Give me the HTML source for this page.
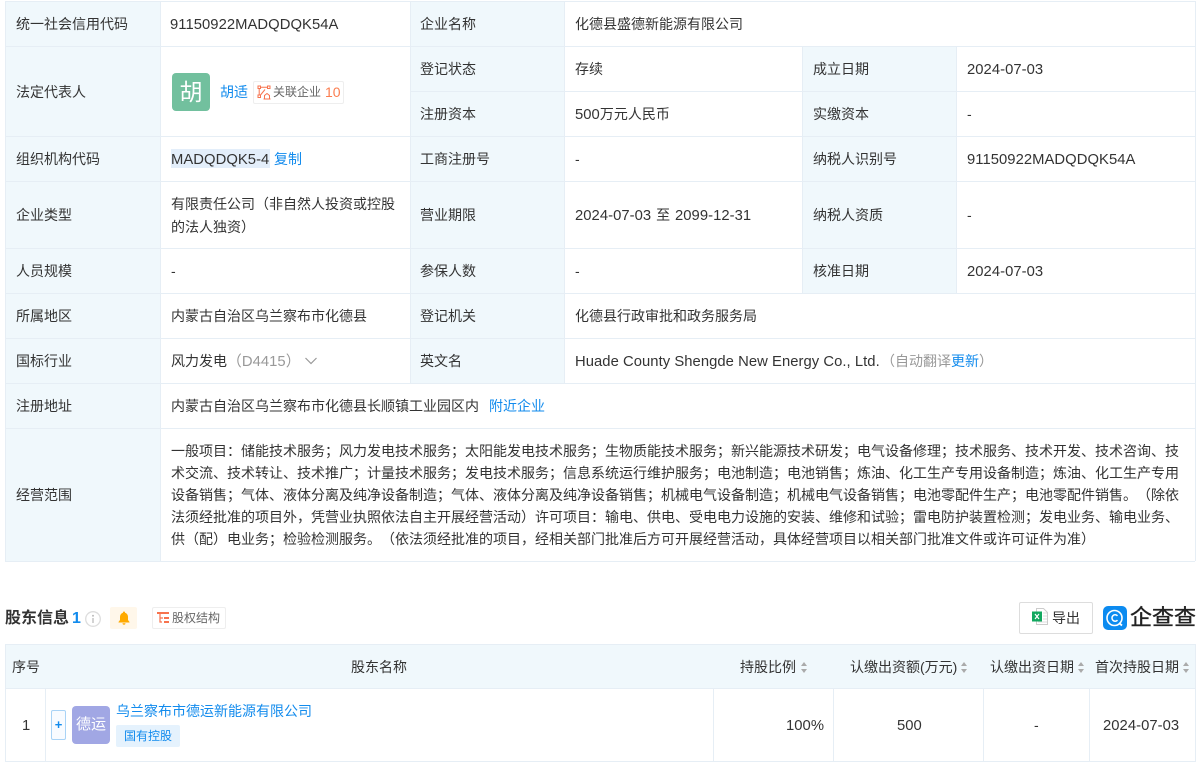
<!DOCTYPE html>
<html lang="zh-CN"><head><meta charset="utf-8"><title>企业信息</title>
<style>
html,body{margin:0;padding:0;background:#fff}
#p{position:relative;width:1200px;height:765px;overflow:hidden;background:#fff;font:14px/20px "Liberation Sans","Noto Sans CJK SC",sans-serif;color:#333;text-spacing-trim:space-all;font-feature-settings:"chws" 0}
#p div,#p span.a,#p svg{position:absolute}
.b{background:#f0f8fc}
.h{background:#e6eef5;height:1px}
.v{background:#e6eef5;width:1px}
.t{white-space:nowrap}
.n{font-size:14.8px;letter-spacing:.05px}
div.n{margin-top:1px}
.l{color:#128bed}
.g{color:#999}
</style></head><body><div id="p">

<div class="b" style="left:5px;top:1px;width:155px;height:560px"></div>
<div class="b" style="left:411px;top:1px;width:153px;height:382px"></div>
<div class="b" style="left:803px;top:46px;width:153px;height:247px"></div>
<div class="b" style="left:5px;top:644px;width:1190px;height:44px"></div>

<div class="h" style="left:5px;top:1px;width:1190px"></div>
<div class="h" style="left:5px;top:46px;width:1190px"></div>
<div class="h" style="left:410px;top:91px;width:785px"></div>
<div class="h" style="left:5px;top:136px;width:1190px"></div>
<div class="h" style="left:5px;top:181px;width:1190px"></div>
<div class="h" style="left:5px;top:248px;width:1190px"></div>
<div class="h" style="left:5px;top:293px;width:1190px"></div>
<div class="h" style="left:5px;top:338px;width:1190px"></div>
<div class="h" style="left:5px;top:383px;width:1190px"></div>
<div class="h" style="left:5px;top:428px;width:1190px"></div>
<div class="h" style="left:5px;top:561px;width:1190px"></div>
<div class="v" style="left:5px;top:1px;height:560px"></div>
<div class="v" style="left:160px;top:1px;height:560px"></div>
<div class="v" style="left:410px;top:1px;height:382px"></div>
<div class="v" style="left:564px;top:1px;height:382px"></div>
<div class="v" style="left:802px;top:46px;height:247px"></div>
<div class="v" style="left:956px;top:46px;height:247px"></div>
<div class="v" style="left:1195px;top:1px;height:560px"></div>

<div class="t" style="left:16px;top:14px">统一社会信用代码</div>
<div class="t n" style="left:170px;top:14px">91150922MADQDQK54A</div>
<div class="t" style="left:420px;top:14px">企业名称</div>
<div class="t" style="left:575px;top:14px">化德县盛德新能源有限公司</div>

<div class="t" style="left:16px;top:82px">法定代表人</div>
<div style="left:172px;top:73px;width:38px;height:38px;border-radius:4px;background:#72c09e;color:#fff;font-size:23px;line-height:38px;text-align:center">胡</div>
<div class="t l" style="left:220px;top:82px">胡适</div>
<div style="left:253px;top:81px;width:89px;height:21px;border:1px solid #eee;border-radius:2px"></div>
<svg style="left:257px;top:85px" width="14" height="15" viewBox="0 0 14 15" fill="none" stroke="#f7734e" stroke-width="1"><rect x="1" y="1" width="2.500" height="2.500"/><rect x="10.500" y="1" width="2.500" height="2.500"/><rect x="1" y="10" width="2.500" height="2.500"/><path d="M3.500 2.200h7M2.200 3.500V10M8 4.500L3.500 10M7.500 14v-3.500l2.500-2 2.500 2V14M6.500 14h7"/></svg>
<div class="t" style="left:273px;top:82px;font-size:12px;color:#666">关联企业</div>
<div class="t" style="left:325px;top:82px;color:#fb7d4f">10</div>

<div class="t" style="left:420px;top:59px">登记状态</div>
<div class="t" style="left:575px;top:59px">存续</div>
<div class="t" style="left:813px;top:59px">成立日期</div>
<div class="t n" style="left:967px;top:59px">2024-07-03</div>

<div class="t" style="left:420px;top:104px">注册资本</div>
<div class="t" style="left:575px;top:104px"><span class="n">500</span>万元人民币</div>
<div class="t" style="left:813px;top:104px">实缴资本</div>
<div class="t" style="left:967px;top:104px">-</div>

<div class="t" style="left:16px;top:149px">组织机构代码</div>
<div style="left:171px;top:149px;width:99px;height:19px;background:#e3eefa"></div>
<div class="t n" style="left:171px;top:149px">MADQDQK5-4</div>
<div class="t l" style="left:274px;top:149px">复制</div>
<div class="t" style="left:420px;top:149px">工商注册号</div>
<div class="t" style="left:575px;top:149px">-</div>
<div class="t" style="left:813px;top:149px">纳税人识别号</div>
<div class="t n" style="left:967px;top:149px">91150922MADQDQK54A</div>

<div class="t" style="left:16px;top:205px">企业类型</div>
<div class="t" style="left:171px;top:193px;line-height:23px">有限责任公司（非自然人投资或控股<br>的法人独资）</div>
<div class="t" style="left:420px;top:205px">营业期限</div>
<div class="t" style="left:575px;top:205px"><span class="n">2024-07-03</span> <span style="margin:0 1px">至</span> <span class="n">2099-12-31</span></div>
<div class="t" style="left:813px;top:205px">纳税人资质</div>
<div class="t" style="left:967px;top:205px">-</div>

<div class="t" style="left:16px;top:261px">人员规模</div>
<div class="t" style="left:171px;top:261px">-</div>
<div class="t" style="left:420px;top:261px">参保人数</div>
<div class="t" style="left:575px;top:261px">-</div>
<div class="t" style="left:813px;top:261px">核准日期</div>
<div class="t n" style="left:967px;top:261px">2024-07-03</div>

<div class="t" style="left:16px;top:306px">所属地区</div>
<div class="t" style="left:171px;top:306px">内蒙古自治区乌兰察布市化德县</div>
<div class="t" style="left:420px;top:306px">登记机关</div>
<div class="t" style="left:575px;top:306px">化德县行政审批和政务服务局</div>

<div class="t" style="left:16px;top:351px">国标行业</div>
<div class="t" style="left:171px;top:351px">风力发电<span class="g n">（D4415）</span></div>
<svg style="left:304px;top:356px" width="14" height="10" viewBox="0 0 14 10" fill="none" stroke="#999" stroke-width="1.2"><path d="M1.500 2l5.500 5.500L12.500 2"/></svg>
<div class="t" style="left:420px;top:351px">英文名</div>
<div class="t n" style="left:575px;top:351px">Huade County Shengde New Energy Co., Ltd.</div>
<div class="t g" style="left:881px;top:351px">（自动翻译<span class="l">更新</span>）</div>

<div class="t" style="left:16px;top:396px">注册地址</div>
<div class="t" style="left:171px;top:396px">内蒙古自治区乌兰察布市化德县长顺镇工业园区内</div>
<div class="t l" style="left:489px;top:396px">附近企业</div>

<div class="t" style="left:16px;top:485px">经营范围</div>
<div class="t" style="left:171px;top:440px;line-height:22px;width:1014px">一般项目：储能技术服务；风力发电技术服务；太阳能发电技术服务；生物质能技术服务；新兴能源技术研发；电气设备修理；技术服务、技术开发、技术咨询、技<br>术交流、技术转让、技术推广；计量技术服务；发电技术服务；信息系统运行维护服务；电池制造；电池销售；炼油、化工生产专用设备制造；炼油、化工生产专用<br>设备销售；气体、液体分离及纯净设备制造；气体、液体分离及纯净设备销售；机械电气设备制造；机械电气设备销售；电池零配件生产；电池零配件销售。（除依<br>法须经批准的项目外，凭营业执照依法自主开展经营活动）许可项目：输电、供电、受电电力设施的安装、维修和试验；雷电防护装置检测；发电业务、输电业务、<br>供（配）电业务；检验检测服务。（依法须经批准的项目，经相关部门批准后方可开展经营活动，具体经营项目以相关部门批准文件或许可证件为准）</div>

<div class="t" style="left:5px;top:609px;font-size:16px;font-weight:bold;line-height:20px">股东信息</div>
<div class="t l" style="left:72px;top:609px;font-size:16px;font-weight:bold;line-height:20px">1</div>
<svg style="left:85px;top:611px" width="16" height="16" viewBox="0 0 16 16" fill="none"><circle cx="8" cy="8" r="7.300" stroke="#ddd" stroke-width="1.300"/><path d="M8 7v5" stroke="#bbb" stroke-width="1.300"/><circle cx="8" cy="4.800" r="1" fill="#bbb"/></svg>
<div style="left:110px;top:607px;width:27px;height:22px;background:#fff7ea;border-radius:2px"></div>
<svg style="left:117px;top:611px" width="14" height="14" viewBox="0 0 14 14"><path d="M7 .5a1 1 0 0 1 1 1.200C10 2.300 11 4 11 6v3l1.500 2v.5h-11V11L3 9V6c0-2 1-3.700 3-4.300A1 1 0 0 1 7 .5zM5.500 12.300h3a1.500 1.500 0 0 1-3 0z" fill="#ffaa00"/></svg>
<div style="left:152px;top:607px;width:72px;height:20px;border:1px solid #eee;border-radius:2px"></div>
<svg style="left:157px;top:612px" width="13" height="12" viewBox="0 0 13 12" fill="none"><path d="M0 1h12" stroke="#f7734e" stroke-width="2"/><path d="M3 2v8h2M3 6h3" stroke="#f7734e" stroke-width="1.200"/><path d="M7 6h5M7 10h5" stroke="#f7734e" stroke-width="2"/></svg>
<div class="t" style="left:172px;top:608px;font-size:12px;color:#666">股权结构</div>

<div style="left:1019px;top:602px;width:72px;height:30px;border:1px solid #ddd;border-radius:2px"></div>
<svg style="left:1032px;top:608px" width="16" height="17" viewBox="0 0 16 17"><path d="M4.500 .5h7l4 4v12h-11z" fill="#fff" stroke="#ccc"/><path d="M11 5h4M11 8h4M11 11h4M6 14h9" stroke="#ddd"/><rect x="0" y="3.500" width="10" height="10" fill="#12a85f"/><path d="M3 6l4 5M7 6l-4 5" stroke="#fff" stroke-width="1.200"/></svg>
<div class="t" style="left:1052px;top:608px">导出</div>

<svg style="left:1103px;top:606px" width="24" height="24" viewBox="0 0 24 24" fill="none"><rect width="24" height="24" rx="5" fill="#0c8bf0"/><circle cx="11.500" cy="12" r="7.500" stroke="#fff" stroke-width="1.600"/><path d="M14.500 9.800a3.200 3.200 0 1 0 0 4.400" stroke="#fff" stroke-width="1.500"/><path d="M16 17l3 2.500" stroke="#fff" stroke-width="1.800"/></svg>
<div class="t" style="left:1130px;top:606px;font-size:22px;line-height:24px;color:#222;-webkit-text-stroke:.35px #222">企查查</div>

<div class="h" style="left:5px;top:644px;width:1190px"></div>
<div class="h" style="left:5px;top:688px;width:1190px"></div>
<div class="h" style="left:5px;top:761px;width:1190px"></div>
<div class="v" style="left:5px;top:644px;height:118px"></div>
<div class="v" style="left:45px;top:688px;height:74px"></div>
<div class="v" style="left:713px;top:688px;height:74px"></div>
<div class="v" style="left:833px;top:688px;height:74px"></div>
<div class="v" style="left:983px;top:688px;height:74px"></div>
<div class="v" style="left:1089px;top:688px;height:74px"></div>
<div class="v" style="left:1195px;top:644px;height:118px"></div>

<div class="t" style="left:12px;top:657px">序号</div>
<div class="t" style="left:351px;top:657px">股东名称</div>
<div class="t" style="left:740px;top:657px">持股比例</div>
<div class="t" style="left:850px;top:657px">认缴出资额<span>(万元)</span></div>
<div class="t" style="left:990px;top:657px">认缴出资日期</div>
<div class="t" style="left:1095px;top:657px">首次持股日期</div>
<svg style="left:800px;top:662px" width="8" height="11" viewBox="0 0 8 11" fill="#aaa"><path d="M4 0l3 4H1zM4 11L1 7h6z"/></svg>
<svg style="left:960px;top:662px" width="8" height="11" viewBox="0 0 8 11" fill="#aaa"><path d="M4 0l3 4H1zM4 11L1 7h6z"/></svg>
<svg style="left:1077px;top:662px" width="8" height="11" viewBox="0 0 8 11" fill="#aaa"><path d="M4 0l3 4H1zM4 11L1 7h6z"/></svg>
<svg style="left:1182px;top:662px" width="8" height="11" viewBox="0 0 8 11" fill="#aaa"><path d="M4 0l3 4H1zM4 11L1 7h6z"/></svg>

<div class="t n" style="left:22px;top:715px">1</div>
<div style="left:51px;top:710px;width:13px;height:28px;border:1px solid #a9d3f6;border-radius:2px;background:#f8fbff;color:#128bed;text-align:center;line-height:28px;font-size:13px;font-weight:bold">+</div>
<div style="left:72px;top:706px;width:38px;height:38px;border-radius:4px;background:#a1a7e4;color:#fff;text-align:center;line-height:38px;font-size:15px">德运</div>
<div class="t l" style="left:116px;top:701px">乌兰察布市德运新能源有限公司</div>
<div style="left:116px;top:725px;width:64px;height:22px;background:#e5f2fd;border-radius:2px;color:#128bed;font-size:12px;line-height:22px;text-align:center">国有控股</div>
<div class="t n" style="left:786px;top:715px">100%</div>
<div class="t n" style="left:897px;top:715px">500</div>
<div class="t" style="left:1034px;top:715px">-</div>
<div class="t n" style="left:1103px;top:715px">2024-07-03</div>

</div></body></html>
